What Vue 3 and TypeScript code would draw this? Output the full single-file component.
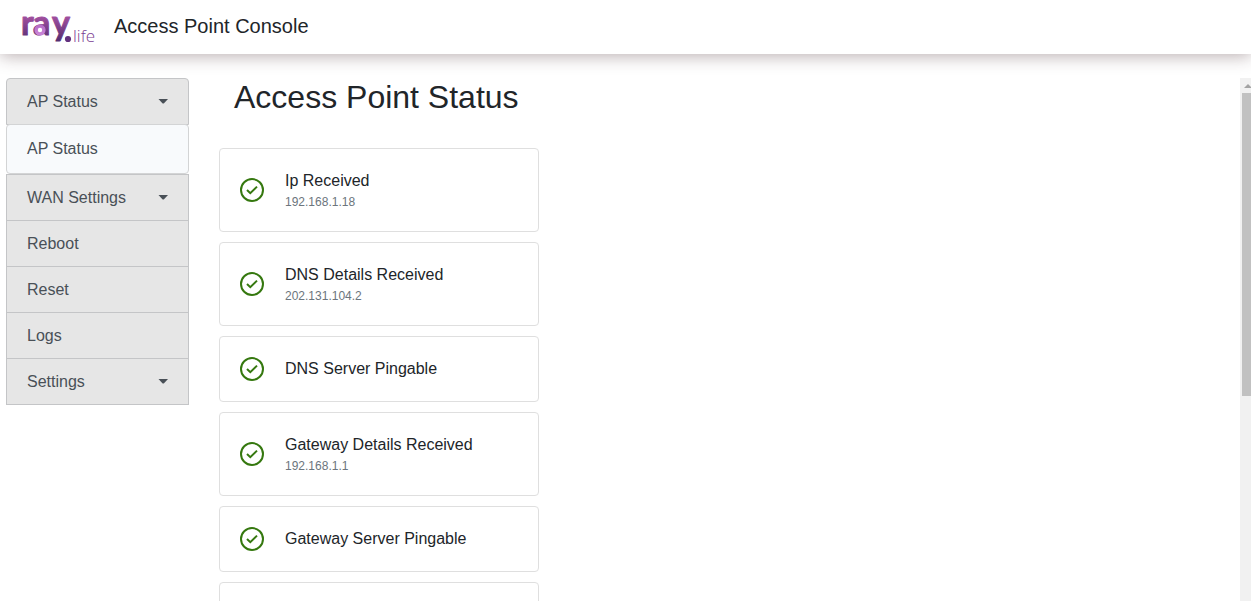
<script setup lang="ts">
import { ref } from 'vue'

interface MenuItem {
  label: string
  children?: string[]
}

interface Check {
  title: string
  detail?: string
}

const menu: MenuItem[] = [
  { label: 'AP Status', children: ['AP Status'] },
  { label: 'WAN Settings', children: [] },
  { label: 'Reboot' },
  { label: 'Reset' },
  { label: 'Logs' },
  { label: 'Settings', children: [] },
]

const checks: Check[] = [
  { title: 'Ip Received', detail: '192.168.1.18' },
  { title: 'DNS Details Received', detail: '202.131.104.2' },
  { title: 'DNS Server Pingable' },
  { title: 'Gateway Details Received', detail: '192.168.1.1' },
  { title: 'Gateway Server Pingable' },
  { title: '' },
]

const openItem = ref('AP Status')

function toggle(item: MenuItem) {
  if (item.children) openItem.value = openItem.value === item.label ? '' : item.label
}
</script>

<template>
  <div class="page">
    <header class="topbar">
      <svg class="logo" viewBox="0 0 76 32" role="img" aria-label="ray.life">
        <defs>
          <linearGradient id="ink" gradientUnits="userSpaceOnUse" x1="0" y1="5" x2="0" y2="31">
            <stop offset="0" stop-color="#a04f9f" />
            <stop offset="1" stop-color="#4f2a6c" />
          </linearGradient>
          <linearGradient id="bowl" x1="0" y1="0" x2="0" y2="1">
            <stop offset="0" stop-color="#b870c8" />
            <stop offset="1" stop-color="#c983d6" />
          </linearGradient>
        </defs>
        <text class="word" x="0" y="23">r</text>
        <text class="word" x="12" y="23">a</text>
        <circle cx="19" cy="18" r="3.9" fill="#fff" stroke="url(#bowl)" stroke-width="3.4" />
        <text class="word" x="31" y="23">y</text>
        <circle cx="47" cy="27" r="3.1" fill="#63307f" />
        <text class="life" x="52" y="30">life</text>
      </svg>
      <span class="brand">Access Point Console</span>
    </header>

    <div class="body">
      <nav class="menu" aria-label="Main">
        <template v-for="item in menu" :key="item.label">
          <button class="item" type="button" @click="toggle(item)">
            <span>{{ item.label }}</span>
            <svg v-if="item.children" class="caret" viewBox="0 0 10 5" aria-hidden="true">
              <path d="M.5 0h9.500L6 4.200q-.8.7-1.600 0z" />
            </svg>
          </button>
          <div v-if="item.children?.length && openItem === item.label" class="submenu">
            <a v-for="child in item.children" :key="child" href="#">{{ child }}</a>
          </div>
        </template>
      </nav>

      <main class="content">
        <h1>Access Point Status</h1>
        <ul class="checks">
          <li v-for="(check, i) in checks" :key="i" class="card">
            <svg class="tick" viewBox="0 0 24 24" aria-hidden="true">
              <circle cx="12" cy="12" r="11" />
              <path d="M7 12l3.300 3.200L17 8.600" />
            </svg>
            <div>
              <div class="title">{{ check.title }}</div>
              <div v-if="check.detail" class="detail">{{ check.detail }}</div>
            </div>
          </li>
        </ul>
      </main>

      <div class="track" aria-hidden="true">
        <svg class="up" viewBox="0 0 15 15"><path d="M4 10h8L8 6z" /></svg>
        <div class="thumb"></div>
      </div>
    </div>
  </div>
</template>

<style>
body {
  margin: 0;
  background: #fff;
}
</style>

<style scoped>
* {
  box-sizing: border-box;
}
.page {
  display: flex;
  flex-direction: column;
  height: 100vh;
  overflow: hidden;
  color: #212529;
  font: 16px/24px "Liberation Sans", Arial, sans-serif;
}
.topbar {
  display: flex;
  flex: none;
  align-items: center;
  gap: 17px;
  height: 54px;
  padding: 0 21px;
  background: #fff;
  box-shadow: 0 2px 16px rgba(60, 30, 35, 0.36);
}
.logo {
  width: 76px;
  height: 32px;
  margin-top: 1px;
  overflow: visible;
}
.word {
  fill: url(#ink);
  stroke: url(#ink);
  stroke-linejoin: round;
  stroke-width: 1;
  font: 700 34px Lato, sans-serif;
}
.life {
  fill: #7a3c92;
  font: 300 17px "Open Sans", sans-serif;
}
.brand {
  padding-bottom: 2px;
  font-size: 20px;
}
.body {
  display: flex;
  flex: 1;
  min-height: 0;
  padding: 24px 0 0 6px;
}
.menu {
  display: flex;
  flex: none;
  flex-direction: column;
  width: 183px;
}
.item {
  display: flex;
  align-items: center;
  justify-content: space-between;
  height: 47px;
  padding: 0 20px;
  border: 1px solid #c4c5c7;
  background: #e6e6e6;
  color: #495057;
  font: inherit;
  text-align: left;
}
.item:first-child {
  border-radius: 4px 4px 0 0;
}
.item + .item {
  margin-top: -1px;
}
.caret {
  width: 10px;
  height: 5px;
  fill: #495057;
}
.submenu {
  margin-top: -1px;
  padding: 12px 20px;
  border: 1px solid #d3d4d5;
  border-radius: 4px;
  background: #f8fafc;
}
.submenu a {
  display: block;
  color: #495057;
  text-decoration: none;
}
.content {
  flex: 1;
  min-width: 0;
  padding-left: 30px;
  overflow: hidden;
}
h1 {
  margin: 0 0 32px;
  padding-left: 15px;
  font-size: 32px;
  font-weight: 400;
  line-height: 38px;
}
.checks {
  display: flex;
  flex-direction: column;
  gap: 10px;
  max-width: 320px;
  margin: 0;
  padding: 0;
  list-style: none;
}
.card {
  display: flex;
  align-items: center;
  gap: 21px;
  min-height: 66px;
  padding: 20px;
  border: 1px solid #dfdfdf;
  border-radius: 4px;
}
.tick {
  width: 24px;
  height: 24px;
  fill: none;
  stroke: #35780f;
  stroke-width: 2;
}
.title {
  font-size: 16px;
}
.detail {
  color: #6c757d;
  font-size: 12px;
  line-height: 18px;
}
.track {
  flex: none;
  width: 11px;
  overflow: hidden;
  background: #f1f1f1;
}
.up {
  display: block;
  width: 15px;
  height: 15px;
  fill: #a3a3a3;
}
.thumb {
  height: 58%;
  margin-left: 2px;
  background: #c1c1c1;
}
</style>
